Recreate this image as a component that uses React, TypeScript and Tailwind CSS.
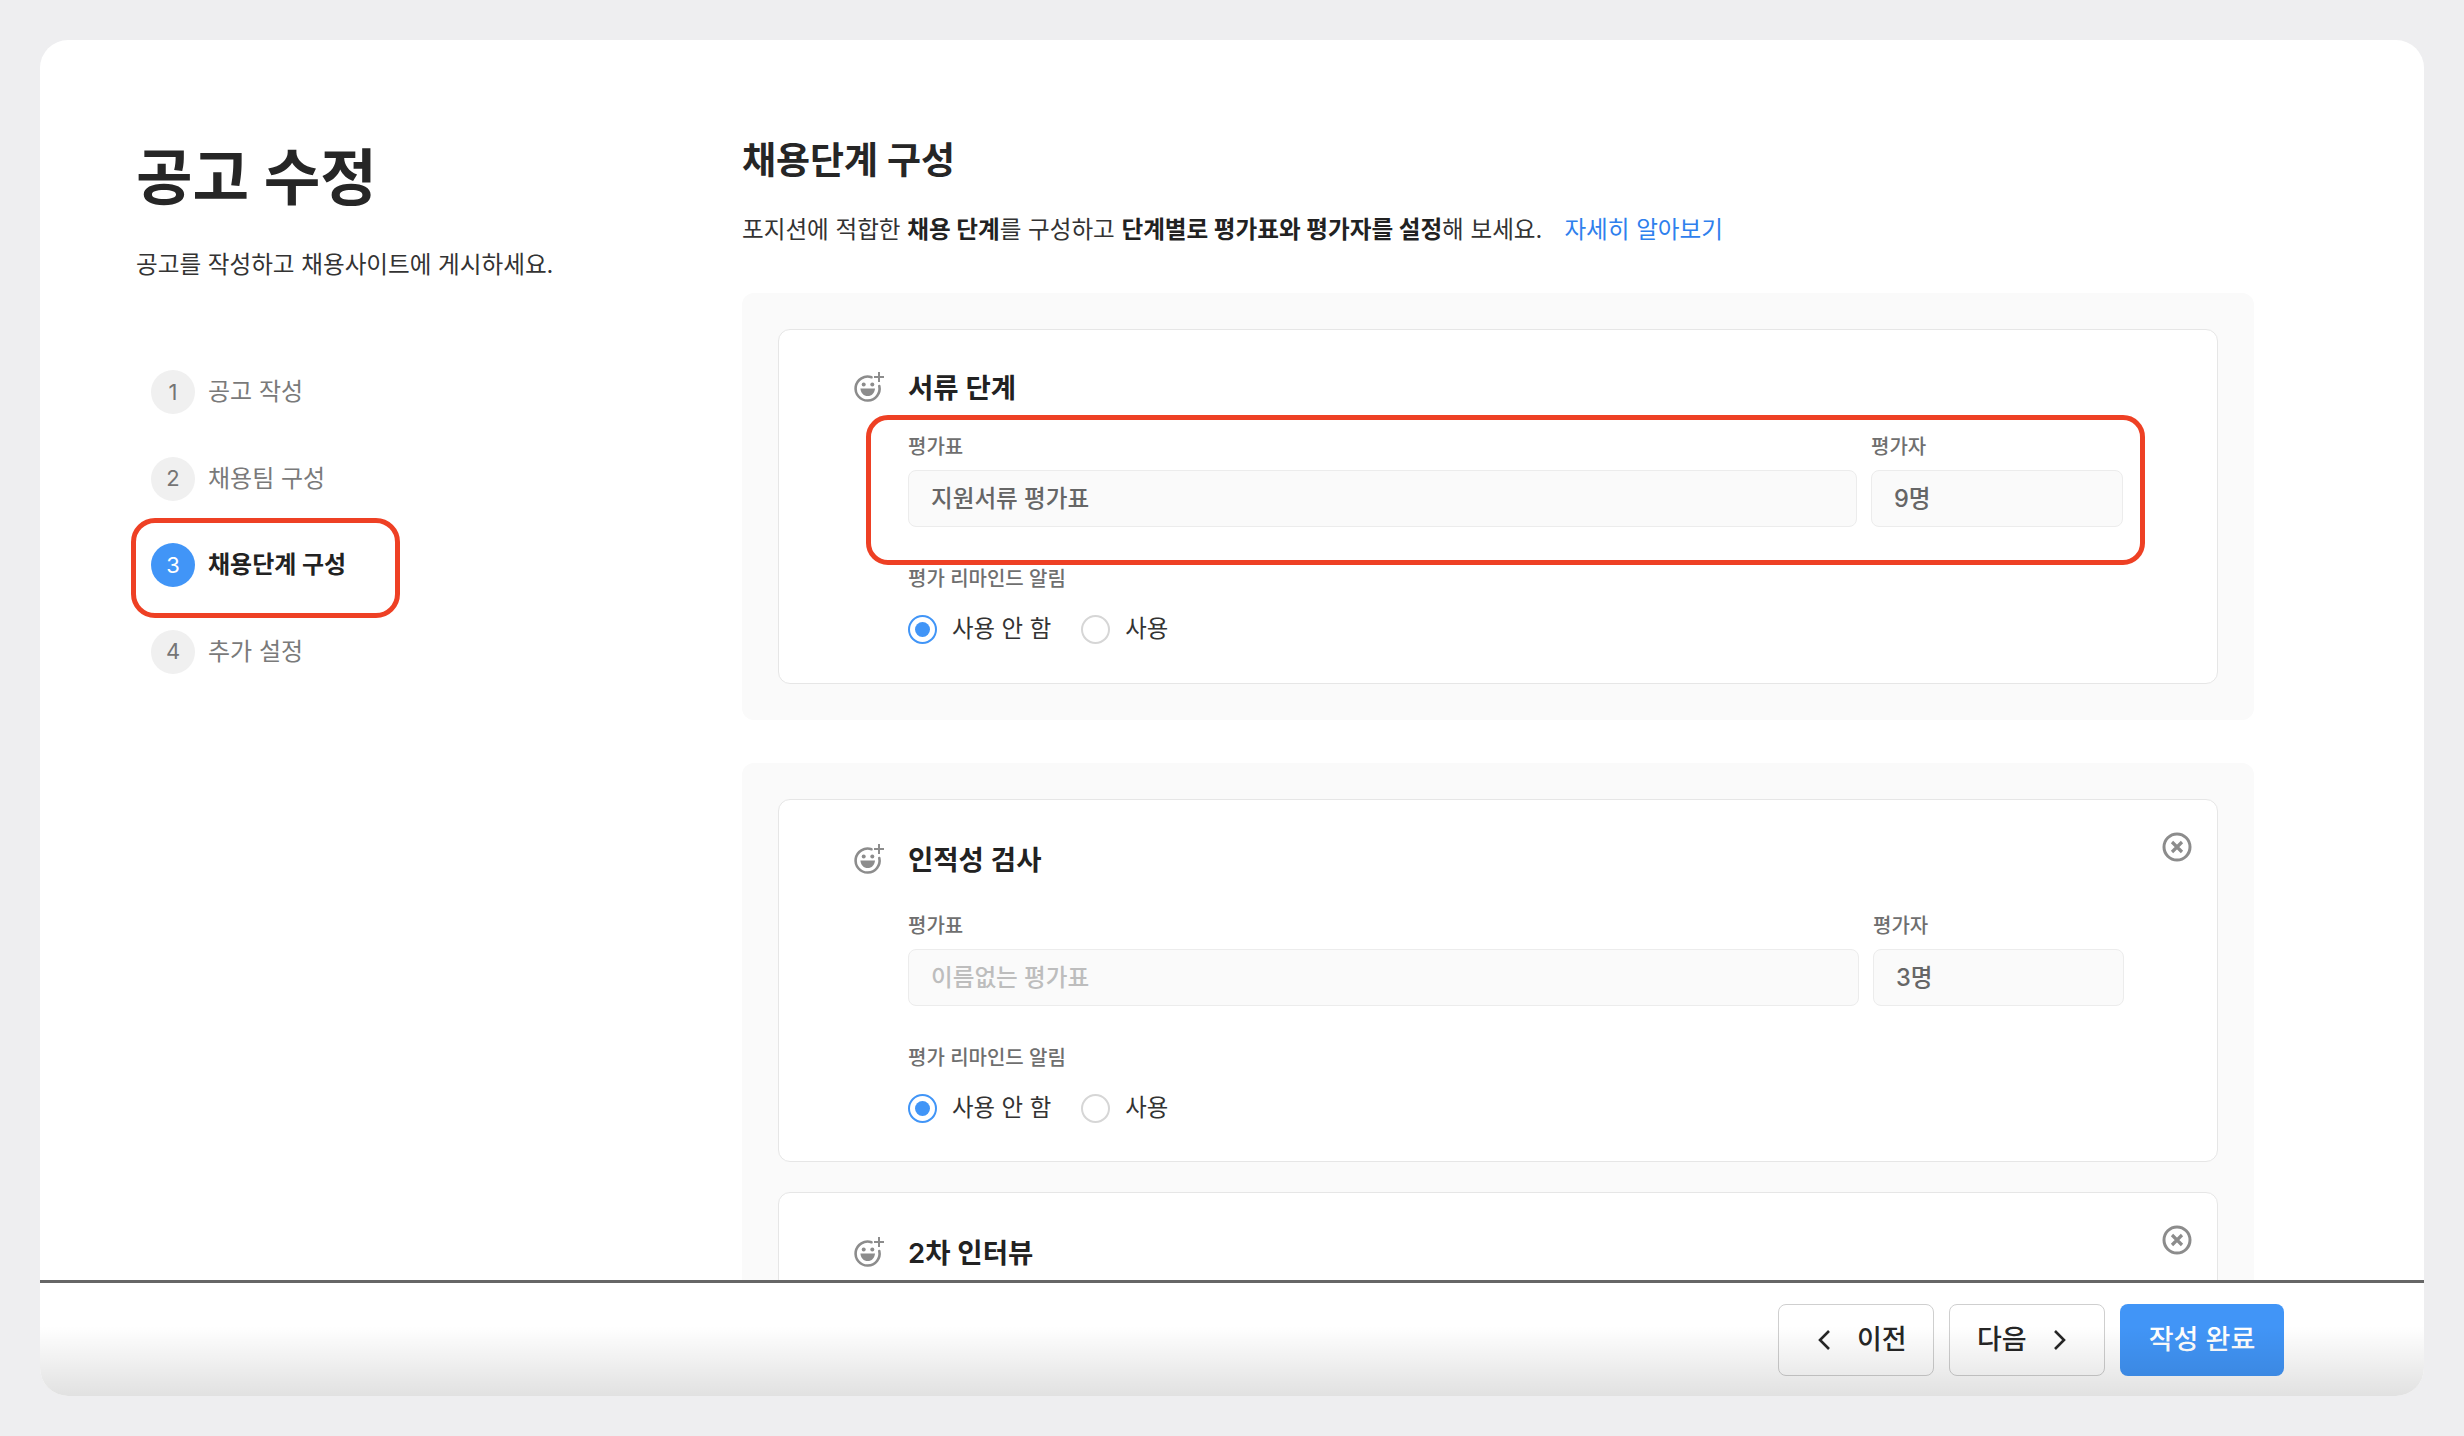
import React from 'react';

const FONT = 'font-["Inter","Noto_Sans_CJK_KR","Noto_Sans",sans-serif]';

const SmileIcon = () => (
  <svg width="32" height="32" viewBox="0 0 32 32" fill="none" className="shrink-0">
    <path d="M18.5 5.2A12 12 0 1 0 26.3 14" stroke="#8c8c8c" strokeWidth="2.6" strokeLinecap="round" />
    <circle cx="10.7" cy="12.4" r="2" fill="#8c8c8c" />
    <circle cx="19.3" cy="12.4" r="2" fill="#8c8c8c" />
    <path d="M7.4 16.4h14.6c-.5 4.8-3.3 7.6-7.3 7.6s-6.8-2.8-7.3-7.6Z" fill="#8c8c8c" />
    <path d="M26 0v10M21 5h10" stroke="#8c8c8c" strokeWidth="2" />
  </svg>
);

const CloseIcon = () => (
  <svg width="30" height="30" viewBox="0 0 30 30" fill="none">
    <circle cx="15" cy="15" r="13" stroke="#8c8c8c" strokeWidth="3" />
    <path d="M10 10l10 10M20 10L10 20" stroke="#8c8c8c" strokeWidth="3.2" />
  </svg>
);

const Radio = ({ checked, label }: { checked?: boolean; label: string }) => (
  <div className="flex items-center gap-[15px]">
    <div className={`w-[29px] h-[29px] rounded-full border-2 flex items-center justify-center ${checked ? 'border-[#4195f7]' : 'border-[#d6d6d6]'}`}>
      {checked && <div className="w-[15px] h-[15px] rounded-full bg-[#4195f7]"></div>}
    </div>
    <span className="text-[23.4px] leading-[30px] text-[#333]">{label}</span>
  </div>
);

const Field = ({ label, value, muted, className }: { label: string; value: string; muted?: boolean; className: string }) => (
  <div className={className}>
    <div className="text-[20px] leading-[24px] font-medium text-[#6f6f6f] mb-[11px]">{label}</div>
    <div className={`h-[57px] rounded-lg border border-[#ececec] bg-[#fafafa] px-[22px] flex items-center text-[23.6px] font-medium ${muted ? 'text-[#bdbdbd]' : 'text-[#666]'}`}>
      {value}
    </div>
  </div>
);

const CardHeader = ({ title }: { title: string }) => (
  <div className="flex items-center gap-[23px] h-[40px]">
    <SmileIcon />
    <div className="text-[27.5px] leading-[40px] font-semibold text-[#222]">{title}</div>
  </div>
);

const StageCard = ({
  title,
  sheet,
  people,
  muted,
  tight,
  highlight,
}: {
  title: string;
  sheet: string;
  people: string;
  muted?: boolean;
  tight?: boolean;
  highlight?: boolean;
}) => (
  <div className={`relative rounded-xl border border-[#e6e6e6] bg-white pl-[74px] ${tight ? 'pt-[38px] pr-[94px] pb-[39px]' : 'pt-[40px] pr-[93px] pb-[38px]'}`}>
    <CardHeader title={title} />
    <div className={`${tight ? 'mt-[27px]' : 'mt-[34px]'} ml-[55px] flex gap-[14px]`}>
      <Field label="평가표" value={sheet} muted={muted} className="flex-1" />
      <Field label="평가자" value={people} className={tight ? 'w-[252px]' : 'w-[251px]'} />
    </div>
    <div className="ml-[55px] mt-[40px] text-[20px] leading-[24px] font-medium text-[#6f6f6f]">평가 리마인드 알림</div>
    <div className="ml-[55px] mt-[23px] flex items-center gap-[30px]">
      <Radio checked label="사용 안 함" />
      <Radio label="사용" />
    </div>
    {!tight && (
      <div className="absolute right-[25px] top-[32px]">
        <CloseIcon />
      </div>
    )}
    {highlight && (
      <div className="absolute left-[87px] top-[85px] w-[1279px] h-[150px] rounded-[22px] border-[5px] border-[#ee4024]"></div>
    )}
  </div>
);

const steps = [
  { n: 1, label: '공고 작성' },
  { n: 2, label: '채용팀 구성' },
  { n: 3, label: '채용단계 구성', active: true },
  { n: 4, label: '추가 설정' },
];

export default function App() {
  return (
    <div className={`${FONT} w-full h-[1436px] bg-[#eeeef0] p-[40px] overflow-hidden`}>
      <div className="relative h-[1356px] rounded-[28px] bg-white overflow-hidden flex flex-col">
        {/* scroll area */}
        <div className="flex-1 min-h-0 overflow-hidden flex">
          <div className="w-[702px] shrink-0 pl-[96px] pt-[99px]">
            <h1 className="text-[61.5px] leading-[78px] font-bold text-[#262626]">공고 수정</h1>
            <p className="mt-[32px] text-[23.6px] leading-[32px] text-[#333]">공고를 작성하고 채용사이트에 게시하세요.</p>
            <div className="relative mt-[89px] ml-[15px] flex flex-col gap-[42.5px]">
              {steps.map((s) => (
                <div key={s.n} className="flex items-center gap-[13px] h-[44px]">
                  <div className={`w-[44px] h-[44px] rounded-full flex items-center justify-center text-[22px] ${s.active ? 'bg-[#4195f7] text-white' : 'bg-[#f0f0f0] text-[#757575]'}`}>
                    {s.n}
                  </div>
                  <span className={`text-[24px] ${s.active ? 'font-bold text-[#222]' : 'text-[#7a7a7a]'}`}>{s.label}</span>
                </div>
              ))}
              <div className="absolute left-[-20px] top-[148px] w-[269px] h-[100px] rounded-[24px] border-[5px] border-[#ee4024]"></div>
            </div>
          </div>

          <div className="w-[1512px] shrink-0 pt-[93px]">
            <h2 className="text-[37px] leading-[56px] font-bold text-[#262626]">채용단계 구성</h2>
            <p className="mt-[25px] text-[23.6px] leading-[32px] text-[#333] flex">
              <span>
                포지션에 적합한 <b className="font-bold text-[#222]">채용 단계</b>를 구성하고 <b className="font-bold text-[#222]">단계별로 평가표와 평가자를 설정</b>해 보세요.
              </span>
              <span className="ml-[22px] text-[#2f80ed]">자세히 알아보기</span>
            </p>

            <div className="mt-[47px] rounded-xl bg-[#fafafa] p-[36px]">
              <StageCard title="서류 단계" sheet="지원서류 평가표" people="9명" tight highlight />
            </div>

            <div className="mt-[43px] rounded-xl bg-[#fafafa] p-[36px] pb-0 flex flex-col gap-[30px]">
              <StageCard title="인적성 검사" sheet="이름없는 평가표" people="3명" muted />
              {/* rest of this card is scrolled out of view */}
              <div className="relative h-[200px] rounded-xl border border-[#e6e6e6] bg-white pl-[74px] pt-[40px]">
                <CardHeader title="2차 인터뷰" />
                <div className="absolute right-[25px] top-[32px]">
                  <CloseIcon />
                </div>
              </div>
            </div>
          </div>
        </div>

        {/* footer */}
        <div className="h-[116px] shrink-0 border-t-[3px] border-[#666] bg-white flex items-start justify-end gap-[15px] pt-[21px] pr-[140px]">
          <div className="w-[156px] h-[72px] rounded-lg border border-[#cfcfcf] bg-white flex items-center pl-[38px] gap-[26px] text-[27px] font-medium text-[#262626]">
            <svg width="14" height="22" viewBox="0 0 14 22" fill="none">
              <path d="M12 2L3 11l9 9" stroke="#262626" strokeWidth="2.6" />
            </svg>
            이전
          </div>
          <div className="w-[156px] h-[72px] rounded-lg border border-[#cfcfcf] bg-white flex items-center pl-[27px] gap-[26px] text-[27px] font-medium text-[#262626]">
            다음
            <svg width="14" height="22" viewBox="0 0 14 22" fill="none">
              <path d="M2 2l9 9-9 9" stroke="#262626" strokeWidth="2.6" />
            </svg>
          </div>
          <div className="w-[164px] h-[72px] rounded-lg bg-[#4195f7] flex items-center justify-center text-[27px] font-medium text-white">
            작성 완료
          </div>
        </div>
        {/* fade laid over the footer */}
        <div className="absolute left-0 right-0 bottom-0 h-[70px] bg-gradient-to-b from-transparent to-[#0000001e] pointer-events-none"></div>
      </div>
    </div>
  );
}
